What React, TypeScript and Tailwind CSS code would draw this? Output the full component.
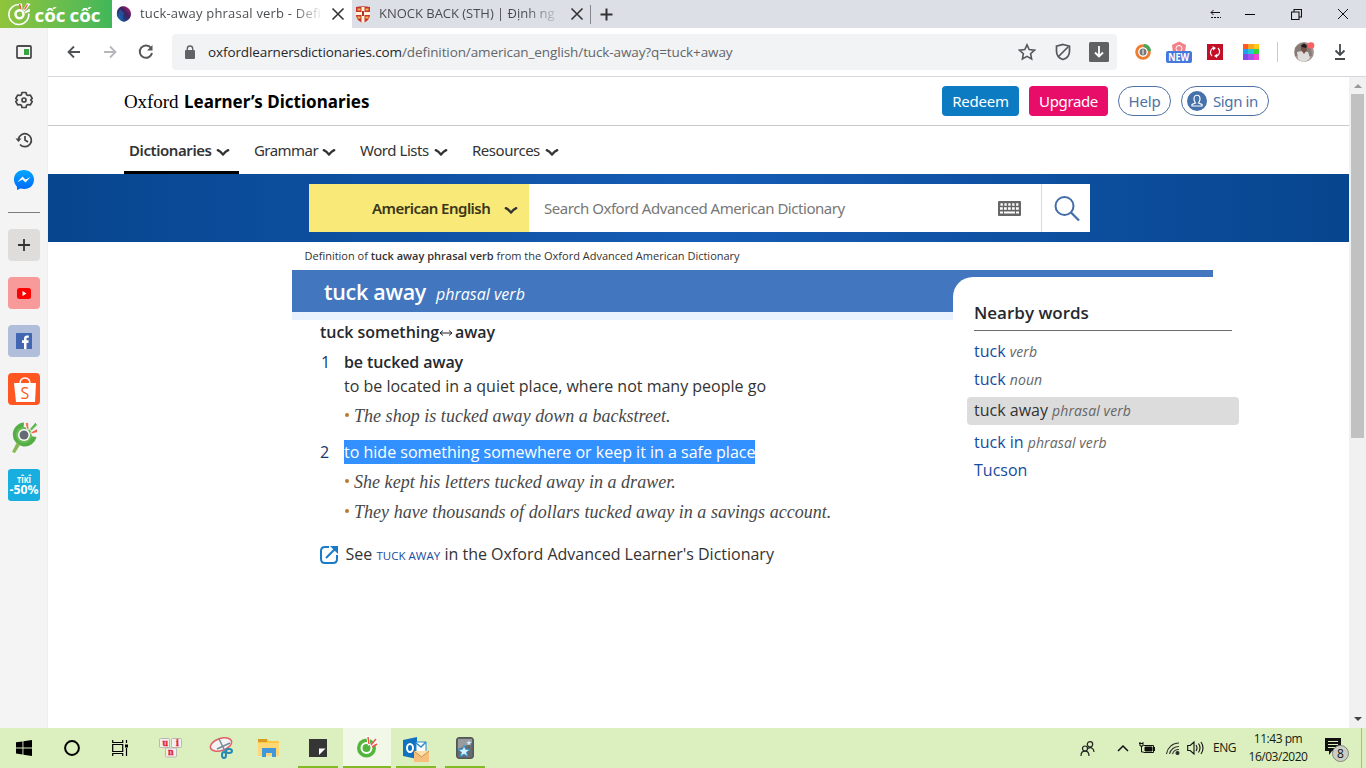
import React from "react";

function Chevron({ className = "" }: { className?: string }) {
  return (
    <svg className={`shrink-0 ${className}`} width="14" height="9" viewBox="0 0 14 9" fill="none" stroke="#333" strokeWidth="2.4" strokeLinecap="round" strokeLinejoin="round">
      <path d="M1.800 2.200C4 3.200 5.500 4.600 7 6.600C8.500 4.600 10 3.200 12.200 2.200" />
    </svg>
  );
}

function TabBar() {
  return (
    <header className="flex h-7 shrink-0 bg-[#dcdfe5] font-['Open_Sans','Noto_Sans',sans-serif] text-[13px]">
      <div className="w-28 bg-linear-to-r from-[#8fc43a] to-[#3fb75a]">
        <svg width="112" height="28" viewBox="0 0 112 28">
          <path d="M19.500 4.500A10 10 0 1 0 28.800 13.500" fill="none" stroke="white" strokeWidth="1.500" />
          <circle cx="19.500" cy="14.300" r="4" fill="none" stroke="white" strokeWidth="2.500" />
          <path d="M19 3.500l3 0 .4 6-1.600 0zM23 10L27 3l3.500 1L24.500 11.500zM24.500 12l5-3.500.5 3-5 2z" fill="white" />
          <path d="M19.500 4l1.500 5M27.500 4.500l-3 5" stroke="#ef4a43" strokeWidth="1.300" />
          <g fill="white" fontFamily="Open Sans, sans-serif" fontSize="17.500" fontWeight="700">
            <text x="34.500" y="21.800" textLength="31" lengthAdjust="spacingAndGlyphs">cốc</text>
            <text x="69.500" y="21.800" textLength="31" lengthAdjust="spacingAndGlyphs">cốc</text>
          </g>
        </svg>
      </div>
      <div className="flex w-60 items-center bg-white pl-1">
        <svg width="16" height="16" viewBox="0 0 16 16">
          <defs>
            <linearGradient id="orb" x1="0" y1="1" x2="1" y2="0">
              <stop offset="0" stopColor="#1590c8" /><stop offset=".35" stopColor="#26377f" /><stop offset=".6" stopColor="#42205f" /><stop offset="1" stopColor="#c52379" />
            </linearGradient>
          </defs>
          <path d="M1 6C2 0 8-1 12 2s4 9 0 12-6 2-9-1-2-5-2-7z" fill="url(#orb)" />
          <path d="M4 3L8 7L6 15Q3 13 2 9z" fill="#1f5fa5" opacity=".7" />
        </svg>
        <span className="ml-2 w-[184px] whitespace-nowrap bg-linear-to-r from-[#45484c] from-83% to-transparent bg-clip-text text-[13px] tracking-[0.2px] text-transparent">tuck-away phrasal verb - Defi</span>
        <svg className="ml-[7px]" width="14" height="14" viewBox="0 0 14 14" stroke="#333" strokeWidth="1.600"><path d="M1.500 1.500l11 11M12.500 1.500l-11 11" /></svg>
      </div>
      <div className="flex w-[239px] items-center pl-1">
        <svg width="14" height="17" viewBox="0 0 14 17">
          <path d="M0 1Q7-.5 14 1v8q0 5-7 8-7-3-7-8z" fill="#c8352c" />
          <path d="M5.500 1h3v5H14v3H8.500v7.500l-1.500.5-1.500-.5V9H0V6h5.500z" fill="#fff3df" />
          <path d="M1.500 3.500h3M9.500 3.500h3M1.500 11.500h3M9.500 11.500h3" stroke="#f3b744" strokeWidth="2" />
          <path d="M7 5v5" stroke="#a8372b" strokeWidth="2" />
        </svg>
        <span className="ml-[9px] w-[183px] whitespace-nowrap bg-linear-to-r from-[#45484c] from-80% to-transparent bg-clip-text text-[13px] tracking-[-0.02px] text-transparent">KNOCK BACK (STH) | Định ng</span>
        <svg className="ml-2" width="14" height="14" viewBox="0 0 14 14" stroke="#333" strokeWidth="1.600"><path d="M1.500 1.500l11 11M12.500 1.500l-11 11" /></svg>
        <div className="ml-[6px] h-[19px] w-px bg-[#85888d]" />
      </div>
      <svg className="ml-[9px] mt-2" width="13" height="13" viewBox="0 0 13 13" stroke="#333" strokeWidth="2"><path d="M6.500 .5v12M.5 6.500h12" /></svg>
      <div className="ml-auto flex items-center pr-[17px]">
        <svg width="12" height="10" viewBox="0 0 12 10" fill="none" stroke="#111"><path d="M1 3.500h9M3.500 1L1 3.500 3.500 6" /><path d="M1 8.500h10" strokeDasharray="2 1" /></svg>
        <div className="ml-[23px] h-px w-2.5 bg-black" />
        <svg className="ml-9" width="11" height="11" viewBox="0 0 11 11" fill="none" stroke="#111" strokeWidth="1.100"><path d="M.5 3h7.500v7.500H.5zM3 3V.5h7.500V8H8" /></svg>
        <svg className="ml-[35px]" width="12" height="12" viewBox="0 0 12 12" stroke="#111"><path d="M1 1l10 10M11 1L1 11" /></svg>
      </div>
    </header>
  );
}

function Toolbar() {
  return (
    <div className="flex h-[49px] shrink-0 items-center border-b border-[#d5d8dc] bg-white pl-[19px]">
      <svg width="14" height="14" viewBox="0 0 14 14" fill="none" stroke="#505356" strokeWidth="1.800"><path d="M13 7H2M7 1.500L1.500 7 7 12.500" /></svg>
      <svg className="ml-[22px]" width="14" height="14" viewBox="0 0 14 14" fill="none" stroke="#b5b7ba" strokeWidth="1.800"><path d="M1 7h11M7 1.500L12.500 7 7 12.500" /></svg>
      <svg className="ml-[21px]" width="16" height="16" viewBox="0 0 16 16" fill="none" stroke="#55585b" strokeWidth="2"><path d="M13 4A6.200 6.200 0 1 0 14 9" /><path d="M14.500 1v5.500H9z" fill="#55585b" stroke="none" /></svg>
      <div className="ml-[18px] flex h-[36px] w-[945px] items-center rounded bg-[#f1f3f4] pl-3">
        <svg width="12" height="14" viewBox="0 0 12 14"><rect x="1" y="5" width="10" height="9" rx="1" fill="#606367" /><path d="M3.300 5V3.700a2.700 2.700 0 0 1 5.400 0V5" fill="none" stroke="#606367" strokeWidth="1.400" /></svg>
        <span className="ml-3 whitespace-nowrap font-['Open_Sans','Noto_Sans',sans-serif] text-[13.5px] tracking-[-0.11px] text-[#63666a]"><span className="text-[#25282b]">oxfordlearnersdictionaries.com</span>/definition/american_english/tuck-away?q=tuck+away</span>
        <svg className="ml-auto" width="18" height="18" viewBox="0 0 18 18" fill="none" stroke="#55585b" strokeWidth="1.600"><path d="M9 1.800l2.200 4.800 5.300.6-3.900 3.500 1 5.200L9 13.300l-4.600 2.600 1-5.200L1.500 7.200l5.300-.6z" /></svg>
        <svg className="ml-[18px]" width="18" height="18" viewBox="0 0 18 18" fill="none" stroke="#55585b" strokeWidth="1.700"><path d="M9 1.500l6.500 1.700v5c0 4-2.500 7-6.500 8.300-4-1.300-6.500-4.300-6.500-8.300v-5zM4 14L14 4" /></svg>
        <svg className="ml-[17px] mr-2" width="20" height="20" viewBox="0 0 20 20"><rect width="20" height="20" rx="1.500" fill="#606163" /><path d="M10 4v10M6 10.500l4 4 4-4" fill="none" stroke="white" strokeWidth="1.800" /></svg>
      </div>
      <svg className="ml-[18px]" width="16" height="16" viewBox="0 0 16 16" fill="none"><circle cx="8" cy="8" r="6.300" stroke="#ee7d32" strokeWidth="3" /><path d="M9 1.500A7 7 0 0 1 14.500 7" stroke="#49a65b" strokeWidth="3.500" /><circle cx="8" cy="8" r="4.500" fill="white" /><circle cx="8" cy="8" r="3.500" fill="#777" /><path d="M8 5.500v5" stroke="white" /></svg>
      <svg className="ml-[15px]" width="26" height="24" viewBox="0 0 26 24"><path d="M6 5l7-3.500L20 5l-1 8H7z" fill="#f58088" /><circle cx="13" cy="8.500" r="3" fill="none" stroke="white" /><rect y="11" width="26" height="12" rx="2" fill="#4478dc" /><text x="2.300" y="21" fill="white" fontFamily="Open Sans" fontWeight="bold" fontSize="10.500" textLength="21" lengthAdjust="spacingAndGlyphs">NEW</text></svg>
      <svg className="ml-[15px]" width="16" height="16" viewBox="0 0 16 16"><path fill="#c40f28" d="M0 0h16v16H0z" /><path d="M5 12A5 5 0 0 1 6 4M11 4a5 5 0 0 1-1 8" stroke="white" strokeWidth="1.200" fill="none" /><path d="M5.500 2L9 4 6 6.500zM10.500 9.500L7 12l3 2z" fill="white" /></svg>
      <svg className="ml-5" width="16" height="16" viewBox="0 0 16 16"><path fill="#ff5a1f" d="M0 0h5v5H0z" /><path fill="#ffa321" d="M5 0h6v5H5z" /><path fill="#ffc91e" d="M11 0h5v5h-5z" /><path fill="#21a0ef" d="M0 5h5v5H0z" /><path fill="#24c8d8" d="M5 5h6v5H5z" /><path fill="#36d53b" d="M11 5h5v5h-5z" /><path fill="#8149e8" d="M0 10h5v6H0z" /><path fill="#a551ef" d="M5 10h6v6H5z" /><path fill="#f044d7" d="M11 10h5v6h-5z" /></svg>
      <div className="ml-[18px] h-5 w-px bg-[#c8cbd0]" />
      <svg className="ml-4" width="21" height="20" viewBox="0 0 21 20"><circle cx="10" cy="10" r="10" fill="#a4958e" /><path d="M1 6Q8-3 17 5l1 9H1z" fill="#877b79" /><path d="M3 10l5-1 6 1 2 6Q10 23 4 17z" fill="#dfdcdc" /><path d="M7 3h5l1 5-3 4-3-4z" fill="#795346" /><path d="M7 4Q10-1 13 4l-1 2-4-1z" fill="#24191c" /><circle cx="17" cy="3.500" r="3.300" fill="#fa6062" /></svg>
      <svg className="ml-[19px]" width="12" height="16" viewBox="0 0 12 16" fill="none" stroke="#45484b" strokeWidth="1.800"><path d="M6 0v10.500M1.500 6.500L6 11l4.500-4.500M1 15h10" /></svg>
    </div>
  );
}

function Sidebar() {
  return (
    <aside className="flex w-12 shrink-0 flex-col items-center border-r border-[#eeeeee] bg-[#f4f4f4] pt-[17px]">
      <svg width="16" height="14" viewBox="0 0 16 14"><rect x="1" y="1" width="14" height="12" rx="1" fill="none" stroke="#4c4d4e" strokeWidth="1.800" /><path d="M8 4h5v6H8z" fill="#39a344" /></svg>
      <svg className="mt-8" width="18" height="18" viewBox="0 0 18 18" fill="none" stroke="#444" strokeWidth="1.700" strokeLinejoin="round"><path d="M7 1.500h4l.6 2.200 1.500.8 2.100-.5 2 3.400L15.700 9l1.500 1.600-2 3.400-2.100-.5-1.500.8-.6 2.200H7l-.6-2.200-1.500-.8-2.100.5-2-3.400L2.300 9 .8 7.400l2-3.400 2.100.5 1.500-.8z" /><circle cx="9" cy="9" r="2" /></svg>
      <svg className="mt-[23px]" width="18" height="16" viewBox="0 0 18 16" fill="none" stroke="#444" strokeWidth="1.700"><path d="M3.500 7A6.500 6.500 0 1 1 5 12.500M10 4v4l3 2" /><path d="M.5 6.500h6L3.500 10z" fill="#444" stroke="none" /></svg>
      <svg className="mt-[22px]" width="20" height="21" viewBox="0 0 20 21"><defs><linearGradient id="msg" x2="0" y2="1"><stop stopColor="#00a8ff" /><stop offset="1" stopColor="#0068fb" /></linearGradient></defs><path d="M10 0C4 0 0 4 0 9.500c0 3 1.300 5.500 3 7.200V20l3.500-1.500C16 20.500 20 15 20 9.500 20 4 15.500 0 10 0z" fill="url(#msg)" /><path d="M3.500 12L8.500 6.500l3 3 5-2.500-5 5.500-3-3z" fill="white" /></svg>
      <div className="mt-[21px] h-px w-8 bg-[#7d7d7d]" />
      <div className="mt-4 flex size-8 items-center justify-center rounded bg-[#dedddb]"><svg width="12" height="12" viewBox="0 0 12 12" stroke="#333" strokeWidth="1.800"><path d="M6 0v12M0 6h12" /></svg></div>
      <div className="mt-4 flex size-8 items-center justify-center rounded bg-[#f89a9a]"><svg width="14" height="11" viewBox="0 0 14 11"><rect width="14" height="11" rx="2.500" fill="#ff0000" /><path d="M5.500 3l4 2.500-4 2.500z" fill="white" /></svg></div>
      <div className="mt-4 flex size-8 items-center justify-center rounded bg-[#b0bedb]"><svg width="16" height="16" viewBox="0 0 16 16"><rect width="16" height="16" rx=".6" fill="#4267b2" /><path d="M8 16V10H6V7.300h2V5.500C8 3.500 9.200 2.400 11 2.400h1.800v2.400h-1.300c-.7 0-1 .4-1 1v1.500h2.200L12.400 10h-1.900v6z" fill="white" /></svg></div>
      <svg className="mt-4" width="32" height="32" viewBox="0 0 32 32"><rect width="32" height="32" rx="4" fill="#ff5722" /><path d="M6 10h22l-1 19H8z" fill="white" /><path d="M12 11c0-4 1.500-6 5-6s5 2 5 6" fill="none" stroke="white" strokeWidth="1.500" /><text x="17" y="25.500" textAnchor="middle" fill="#ff5722" fontFamily="Open Sans, sans-serif" fontSize="16">S</text></svg>
      <svg className="mt-[15px]" width="28" height="34" viewBox="0 0 28 34"><path d="M14 2.500A12 12 0 1 0 26.500 17l-6-1a6 6 0 1 1-7-7z" fill="#55ad46" /><path d="M7 22l3 3-5 8-3-1z" fill="#89b957" /><circle cx="14" cy="15" r="8" fill="#6cbd55" /><circle cx="14" cy="15" r="6" fill="white" /><circle cx="14" cy="15" r="4.500" fill="#656b75" /><path d="M15 3l3.500-1 .5 7-2 1z" fill="#f27461" stroke="white" strokeWidth=".8" /><path d="M19.500 9l6-7 2 3-6 6z" fill="#61b855" stroke="white" strokeWidth=".8" /><path d="M21 12l6.500-3.500v4L21 14z" fill="#ed6653" stroke="white" strokeWidth=".8" /></svg>
      <svg className="mt-[15px]" width="32" height="32" viewBox="0 0 32 32"><rect width="32" height="32" rx="3" fill="#18aedf" /><g fill="white" fontFamily="Open Sans, sans-serif" fontWeight="700"><text x="9" y="13.500" fontSize="9.500" textLength="14" lengthAdjust="spacingAndGlyphs">TÎKÎ</text><text x="1.500" y="25" fontSize="11.500" textLength="29" lengthAdjust="spacingAndGlyphs">-50%</text></g></svg>
    </aside>
  );
}

const navItems = [
  { label: "Grammar", style: "ml-[15px] w-[82px]", text: "tracking-[-0.55px]" },
  { label: "Word Lists", style: "ml-6 w-[88px]", text: "tracking-[-0.45px]" },
  { label: "Resources", style: "ml-6 w-[87px]", text: "tracking-[-0.47px]" },
];

function SiteHeader() {
  return (
    <>
      <div className="flex h-[49px] items-center border-b border-[#c9c9c9] pl-[76px] pr-[80px] font-['Noto_Sans','Open_Sans',sans-serif]">
        <h1 className="flex items-baseline whitespace-nowrap pt-0.5 text-black"><span className="w-[60px] font-['Liberation_Serif',serif] text-[19px] tracking-[-0.1px]">Oxford</span><span className="text-[17px] font-bold tracking-[0.02px]">Learner’s Dictionaries</span></h1>
        <div className="ml-auto flex gap-2.5 text-[15px]">
          <button className="h-[30px] w-[77px] rounded bg-[#0c7bc1] tracking-[-0.25px] text-white">Redeem</button>
          <button className="h-[30px] w-[79px] rounded bg-[#e80d69] tracking-[-0.35px] text-white">Upgrade</button>
          <button className="h-[30px] w-[53px] rounded-full border border-[#4d71a6] tracking-[-0.2px] text-[#4d71a6]">Help</button>
          <button className="flex h-[30px] w-[88px] items-center rounded-full border border-[#4d71a6] pl-[5px] tracking-[-0.4px] text-[#4d71a6]">
            <svg width="20" height="20" viewBox="0 0 20 20"><circle cx="10" cy="10" r="10" fill="#4672ab" /><path d="M7 8c0-5 6-5 6 0 0 2-.7 3-1.500 4l3.500 1.500V15H5v-1.500L8.500 12C7.700 11 7 10 7 8z" fill="none" stroke="white" strokeWidth="1.200" /></svg>
            <span className="ml-1.5">Sign in</span>
          </button>
        </div>
      </div>
      <nav className="flex h-12 pl-[76px] font-['Noto_Sans','Open_Sans',sans-serif] text-[15px] text-[#333]">
        <div className="flex w-[115px] items-center justify-between border-b-[3px] border-black pl-[5px] pr-[9px] pt-[3px] font-semibold"><span className="tracking-[-0.42px]">Dictionaries</span><Chevron className="mt-1" /></div>
        {navItems.map((n) => <div key={n.label} className={`flex items-center justify-between whitespace-nowrap ${n.style}`}><span className={n.text}>{n.label}</span><Chevron className="mt-1" /></div>)}
      </nav>
      <div className="h-[68px] bg-[linear-gradient(90deg,#07458e,#155cb5_50%,#07458e)] pl-[261px] pt-2.5 font-['Noto_Sans','Open_Sans',sans-serif] text-[15px]">
        <div className="flex h-12 w-[781px] bg-white">
          <div className="flex w-[220px] shrink-0 items-center bg-[#f8e978] pl-[63px] font-semibold text-[#3b3518]"><span className="w-[132px] whitespace-nowrap tracking-[-0.52px]">American English</span><Chevron className="mt-1" /></div>
          <div className="flex flex-1 items-center border-r border-[#d9dbe0] pl-[15px] pr-5 text-[#777]"><span className="whitespace-nowrap tracking-[-0.46px]">Search Oxford Advanced American Dictionary</span>
            <svg className="ml-auto" width="23" height="15" viewBox="0 0 23 15"><rect width="23" height="15" rx="1" fill="#666" /><path d="M2.500 3.500h18" stroke="white" strokeWidth="2.500" strokeDasharray="2.300 1.600" /><path d="M2 7.500h19" stroke="white" strokeWidth="2.500" strokeDasharray="2.800 1.200" /><path d="M2 11.500h3M6 11.500h11M18 11.500h3" stroke="white" strokeWidth="2.200" /></svg>
          </div>
          <svg className="ml-3 mr-[10px] mt-3 shrink-0" width="26" height="26" viewBox="0 0 26 26" fill="none" stroke="#426da8" strokeWidth="2"><circle cx="10.500" cy="10" r="9" /><path d="M17 16.500l8 8" strokeWidth="2.300" /></svg>
        </div>
      </div>
    </>
  );
}

function Example({ text }: { text: string }) {
  return (
    <li className="mt-1.5 flex h-6 items-center whitespace-nowrap">
      <span className="mb-0.5 ml-px mr-[5px] size-1 rounded-full bg-[#b67c2c]" />
      <span className="font-['Liberation_Serif',serif] text-[18px] italic tracking-[0.03px] text-[#484848]">{text}</span>
    </li>
  );
}

function Entry() {
  return (
    <main className="font-['Open_Sans',sans-serif] text-[16px] leading-6 text-[#333]">
      <p className="h-7 whitespace-nowrap pl-[256.500px] text-[11px] leading-[28px]">Definition of <b className="font-semibold">tuck away phrasal verb</b> from the Oxford Advanced American Dictionary</p>
      <div className="ml-[244px] h-[7px] w-[921px] bg-[#4276be]" />
      <div className="ml-[244px] flex">
        <article className="w-[661px] whitespace-nowrap">
          <div className="flex h-[43px] items-baseline border-b-8 border-[#e8f1fe] bg-[#4276be] pl-8 text-white"><h2 className="w-[112px] text-[21.5px] font-semibold leading-[30px] tracking-[-0.3px]">tuck away</h2><i className="text-[16px]">phrasal verb</i></div>
          <div className="pl-7">
            <h3 className="h-[30px] font-semibold tracking-[-0.05px] text-[#26292d]">tuck something<span className="inline-block w-4"><svg className="mb-0.5 inline-block" width="14" height="8" viewBox="0 0 14 8" fill="none" stroke="#222"><path d="M1 4h12M4 1.500L1 4l3 2.500M10 1.500L13 4l-3 2.500" /></svg></span>away</h3>
            <div className="flex"><span className="w-6 pl-px text-[#17376a]">1</span><div><h4 className="font-semibold tracking-[-0.1px] text-[#26292d]">be tucked away</h4><p>to be located in a quiet place, where not many people go</p><ul><Example text="The shop is tucked away down a backstreet." /></ul></div></div>
            <div className="mt-3 flex"><span className="w-6 text-[#17376a]">2</span><div><p className="w-[411px] bg-[#3390ff] text-white">to hide something somewhere or keep it in a safe place</p><ul><Example text="She kept his letters tucked away in a drawer." /><Example text="They have thousands of dollars tucked away in a savings account." /></ul></div></div>
            <div className="mt-[18px] flex items-center">
              <svg width="18" height="18" viewBox="0 0 18 18" fill="none" stroke="#177bc7" strokeWidth="2"><path d="M9 1H5Q1 1 1 5v8q0 4 4 4h8q4 0 4-4V9M6 12L15 3" /><path d="M10 0h8v8z" fill="#177bc7" stroke="none" /></svg>
              <p className="ml-[7.5px]">See <span className="text-[11.5px] font-medium tracking-[0.03px] text-[#174b9e]">TUCK AWAY</span> in the Oxford Advanced Learner's Dictionary</p>
            </div>
          </div>
        </article>
        <section className="h-[230px] w-[286px] bg-[linear-gradient(#4276be_0_35px,white_35px)]">
          <div className="h-full rounded-tl-[20px] bg-white pl-3.5 pt-6 [&_i]:text-[14px] [&_i]:tracking-[0.1px] [&_i]:text-[#666]">
            <h3 className="ml-[7px] h-[30px] w-[258px] border-b border-[#6c6c6c] text-[17px] font-semibold text-[#26292d]">Nearby words</h3>
            <ul className="pt-1.5 leading-7 text-[#174b9e] [&_li]:h-7 [&_li]:pl-[7px]">
              <li>tuck <i>verb</i></li>
              <li>tuck <i>noun</i></li>
              <li className="mb-[3px] mt-1 rounded bg-[#dcdcdc] text-[#333] leading-[26px]">tuck away <i>phrasal verb</i></li>
              <li>tuck in <i>phrasal verb</i></li>
              <li>Tucson</li>
            </ul>
          </div>
        </section>
      </div>
    </main>
  );
}

function Taskbar() {
  return (
    <footer className="flex h-10 shrink-0 items-center bg-[#dcefbe] pl-4">
      <svg width="16" height="16" viewBox="0 0 16 16"><path d="M0 2.300l6.500-.9v6.100H0zM7.400 1.200L16 0v7.500H7.400zM0 8.400h6.500v6.100L0 13.600zM7.400 8.400H16V16l-8.600-1.200z" /></svg>
      <svg className="ml-8" width="16" height="16" viewBox="0 0 16 16"><circle cx="8" cy="8" r="6.900" fill="none" stroke="black" strokeWidth="2" /></svg>
      <svg className="ml-8" width="16" height="16" viewBox="0 0 16 16" fill="none" stroke="black" strokeWidth="1.200"><path d="M.7 0v2.500h10V0M.7 16v-2.500h10V16M.7 4.500h10v7H.7zM14.500 0v3M14.500 8v8" /><path d="M13 4.500h3v3h-3z" fill="black" stroke="none" /></svg>
      <svg className="ml-[31px]" width="24" height="20" viewBox="0 0 24 20"><g fill="#f5eeee" stroke="#a7a0a5" strokeWidth=".7"><rect x=".5" y=".5" width="10" height="9" rx="1" /><rect x="12.500" y=".5" width="10" height="9" rx="1" /><rect x="6.500" y="10" width="11" height="9" rx="1" /></g><g fill="#dc2836" stroke="#dc2836" strokeWidth=".4" fontFamily="Liberation Serif" fontSize="10" fontWeight="bold"><text x="3.500" y="7.500">u</text><text x="17" y="7.500">i</text><text x="9" y="17">n</text></g></svg>
      <svg className="ml-[26px]" width="24" height="22" viewBox="0 0 24 22" fill="none"><ellipse cx="12" cy="7.500" rx="11" ry="6" transform="rotate(-18 12 7.500)" fill="#f4f3f4" stroke="#e06068" strokeWidth="1.500" /><path d="M10 2l6 12M21 6L8 12" stroke="#778a98" strokeWidth="1.500" /><ellipse cx="15" cy="18" rx="2" ry="3" stroke="#2488b4" strokeWidth="2" /><ellipse cx="20" cy="14" rx="3" ry="2" stroke="#2488b4" strokeWidth="2" /></svg>
      <svg className="ml-[25px]" width="22" height="20" viewBox="0 0 22 20"><path d="M0 1h9l2 2h10v15H0z" fill="#ffc843" /><path d="M0 1h9v3H0z" fill="#d99b20" /><path d="M0 5h21v13H0z" fill="#ffd875" /><path d="M4 19v-9h14v9h-4v-4H8v4z" fill="#4097dc" /></svg>
      <div className="ml-[18px] flex h-10 w-10 items-center justify-center border-b-2 border-[#82ba27]"><svg className="mt-0.5" width="18" height="18" viewBox="0 0 18 18"><path d="M0 0h18v18H0z" fill="#353535" /><path d="M10 16V9.500h6.500z" fill="white" /></svg></div>
      <div className="ml-[5px] flex h-10 w-12 items-center justify-center border-b-2 border-[#82ba27] bg-[#f1f8e7]"><svg width="22" height="22" viewBox="0 0 22 22"><circle cx="10.500" cy="12" r="9.500" fill="#52b63c" /><circle cx="10.500" cy="12" r="5" fill="none" stroke="white" strokeWidth="2" /><path d="M10 0l4 0v8l-2 2zM15 8l5-6 2 5-6 4z" fill="white" /><path d="M12 1l1 7M20 3l-5 6M21 8l-5 3" stroke="#ee5448" strokeWidth="1.500" /></svg></div>
      <div className="ml-[5px] flex h-10 w-10 items-center justify-center border-b-2 border-[#82ba27]"><svg className="mt-1" width="26" height="25" viewBox="0 0 26 25"><path d="M0 3L14 0v22L0 19z" fill="#1071bf" /><path d="M13 5h10v10H13z" fill="white" stroke="#288ccd" /><path d="M13 6l5 4 5-5" fill="none" stroke="#288ccd" strokeWidth="1.500" /><ellipse cx="7" cy="11" rx="3" ry="4" fill="none" stroke="white" strokeWidth="2" /><path d="M11 14h15v11H11z" fill="#f6bf7b" /><path d="M11 14l7.500 6 7.500-6" fill="#ffe0a8" stroke="#cb8e4a" /></svg></div>
      <div className="ml-[9px] flex h-10 w-10 items-center justify-center border-b-2 border-[#82ba27]"><svg className="mt-0.5" width="18" height="22" viewBox="0 0 18 22"><rect x=".7" y=".7" width="16.600" height="20.600" rx="2" fill="#686b6e" stroke="#383c40" /><path d="M2 2h14v4L2 12z" fill="#999c9e" /><path d="M8 8l1.500 4.300 4.500.2-3.500 2.700 1.300 4.500L8 17l-3.800 2.700 1.300-4.500L2 12.500l4.500-.2z" fill="#d9f2ff" stroke="#3298d5" /><path d="M13 3l.7 2 2 .1-1.600 1.300.5 2L13 7.200l-1.600 1.200.5-2-1.600-1.300 2-.1z" fill="#c8e9ff" /></svg></div>
      <div className="ml-auto flex h-full items-center font-['Open_Sans','Noto_Sans',sans-serif] text-[12px] leading-[18px] text-[#151d12]">
        <svg width="15" height="15" viewBox="0 0 15 15" fill="none" stroke="#222" strokeWidth="1.200"><circle cx="5" cy="7.500" r="2.500" /><circle cx="10" cy="3.300" r="2.700" /><path d="M1 15c0-6.500 8-6.500 8 0M8 7.500c3-2 6 0 6 3.500" /></svg>
        <svg className="ml-[22px]" width="12" height="8" viewBox="0 0 12 8" fill="none" stroke="#111" strokeWidth="1.500"><path d="M1 7l5-5 5 5" /></svg>
        <svg className="ml-2.5" width="16" height="12" viewBox="0 0 16 12" fill="none" stroke="#111"><path d="M4.500 3.500h10v7h-10M15.500 5v4M0 1.500h4M1 0v4h3V0M2.500 4v6h2" /><path d="M6 5h7v4H6z" fill="#111" /></svg>
        <svg className="ml-[11px]" width="14" height="14" viewBox="0 0 14 14" fill="none" stroke="#333" strokeWidth="1.100"><path d="M.5 13A12.500 12.500 0 0 1 13 2M3.500 13A9.500 9.500 0 0 1 13 5.500M6.500 13A6.500 6.500 0 0 1 13 8.500" /><circle cx="11.500" cy="12" r="1.500" fill="#222" /></svg>
        <svg className="ml-[7px]" width="17" height="14" viewBox="0 0 17 14" fill="none" stroke="#111" strokeWidth="1.100"><path d="M.7 4.500h2.500L7 1v12L3.200 9.500H.7zM9 4q2 3 0 6M11.500 2.500q3 4.500 0 9M14 1q4 6 0 12" /></svg>
        <span className="ml-[9px] w-[23px] whitespace-nowrap tracking-[-0.5px]">ENG</span>
        <div className="ml-3 w-[60px] whitespace-nowrap text-center text-[12px] tracking-[-0.48px]"><div>11:43 pm</div><div>16/03/2020</div></div>
        <svg className="ml-[17px] mt-1" width="25" height="25" viewBox="0 0 25 25"><path d="M0 0h16v13H7l-3 4v-4H0z" fill="#111" /><path d="M3 3.500h10M3 6.500h10M3 9.500h7" stroke="#dcefbe" /><circle cx="15.500" cy="15.500" r="8" fill="#cccfc7" stroke="#828777" /><text x="15.500" y="20" textAnchor="middle" fontFamily="Open Sans" fontSize="12" fill="#111">8</text></svg>
        <div className="ml-[11px] mr-1 h-full w-px bg-[#a9bd8c]" />
      </div>
    </footer>
  );
}

export default function App() {
  return (
    <div className="flex h-[768px] w-[1366px] flex-col overflow-hidden bg-white">
      <TabBar />
      <div className="flex min-h-0 flex-1">
        <Sidebar />
        <div className="flex min-w-0 flex-1 flex-col">
          <Toolbar />
          <div className="flex min-h-0 flex-1">
            <div className="min-w-0 flex-1"><SiteHeader /><Entry /></div>
            <div className="flex w-[17px] flex-col items-center bg-[#f1f1f1] py-1.5">
              <svg width="8" height="5" viewBox="0 0 8 5"><path d="M0 5l4-4 4 4z" fill="#999" /></svg>
              <div className="mt-1.5 h-[344px] w-[13px] bg-[#c1c1c1]" />
              <svg className="mt-auto" width="8" height="5" viewBox="0 0 8 5"><path d="M0 0l4 4 4-4z" fill="#444" /></svg>
            </div>
          </div>
        </div>
      </div>
      <Taskbar />
    </div>
  );
}
